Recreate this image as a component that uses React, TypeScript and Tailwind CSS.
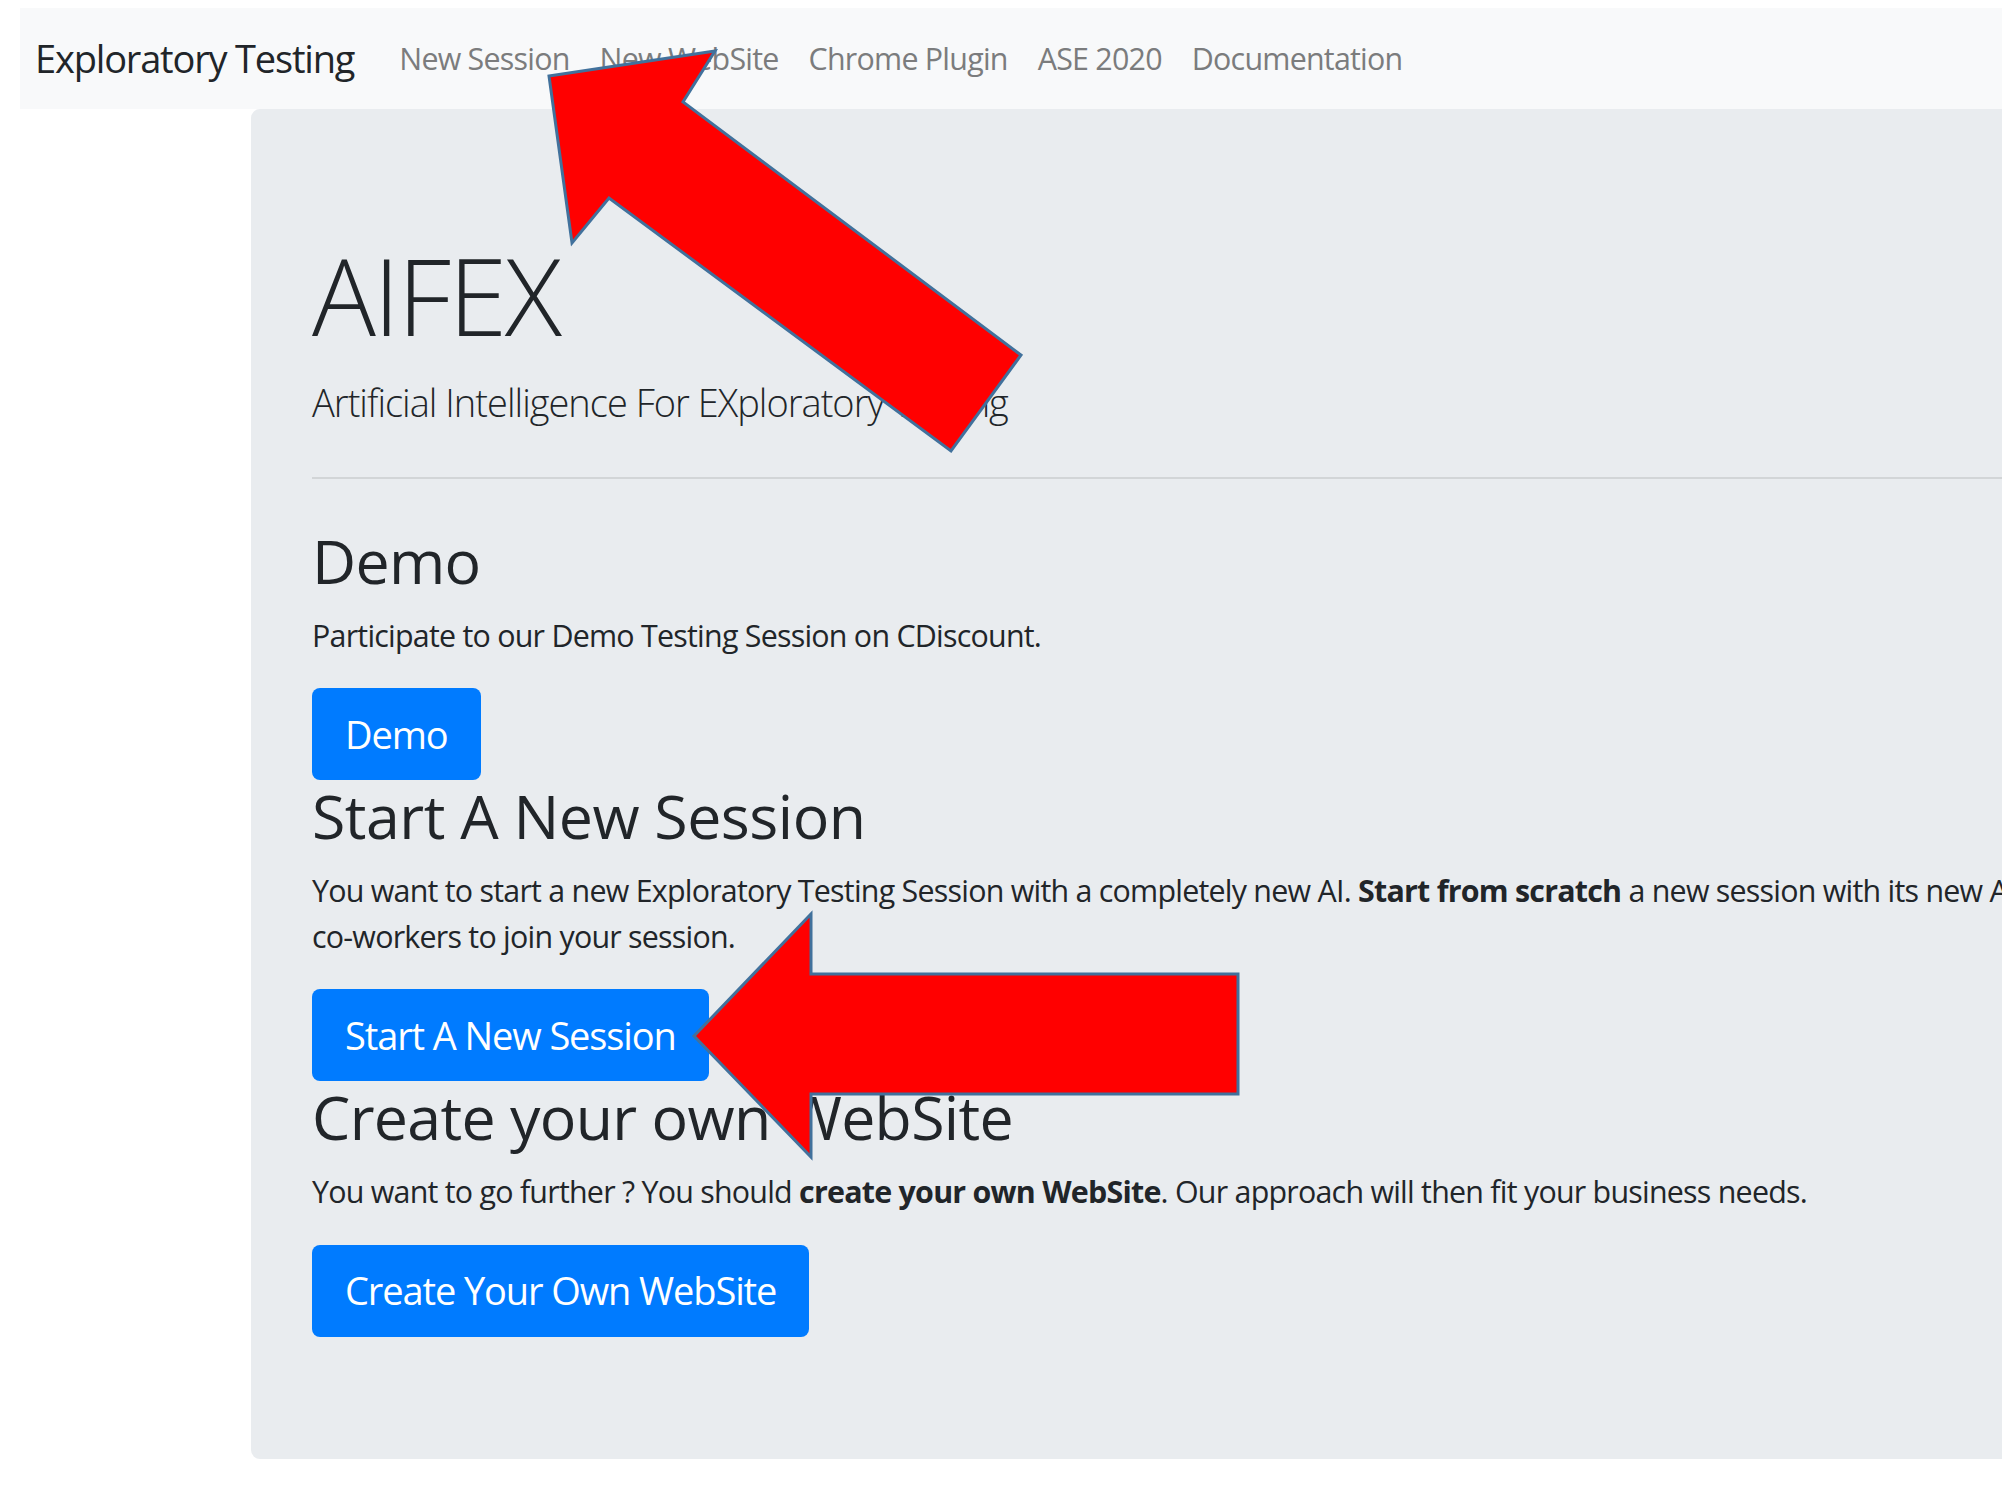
import React from 'react'

const links = ['New Session', 'New WebSite', 'Chrome Plugin', 'ASE 2020', 'Documentation']

const Arrows = () => (
  <svg className="absolute left-0 top-0 pointer-events-none" width="2002" height="1499" viewBox="0 0 2002 1499">
    <polygon
      points="549,76 715,51 683,102 1021,355 951,451 609,198 572,243"
      fill="#ff0000"
      stroke="#41719c"
      strokeWidth="3"
      strokeLinejoin="miter"
    />
    <polygon
      points="694,1036 811,914 811,974 1238,974 1238,1094 811,1094 811,1157"
      fill="#ff0000"
      stroke="#41719c"
      strokeWidth="3"
      strokeLinejoin="miter"
    />
  </svg>
)

const Button = ({ label }: { label: string }) => (
  <div className="inline-flex h-[92px] items-center rounded-[8px] bg-[#007bff] px-[33px] text-[38px] tracking-[-0.029em] text-white">
    {label}
  </div>
)

const App = () => {
  return (
    <div className="relative h-[1499px] w-[2002px] overflow-hidden bg-white font-['Open_Sans',sans-serif] text-[#212529]">
      <nav className="ml-[20px] mt-[8px] flex h-[101px] w-[2400px] items-center bg-[#f8f9fa] pl-[15px]">
        <span className="mr-[30px] text-[38px] leading-[1.5] tracking-[-0.031em]">Exploratory Testing</span>
        {links.map((l) => (
          <span key={l} className="px-[15px] text-[30.4px] leading-[1.5] tracking-[-0.025em] text-[#7b7c7d]">
            {l}
          </span>
        ))}
      </nav>

      <div className="ml-[251px] w-[2400px] rounded-[9px] bg-[#e9ecef] px-[61px] pt-[122px] pb-[122px]">
        <h1 className="mb-[15px] text-[106.4px] font-light leading-[1.2] tracking-[-0.024em]">AIFEX</h1>
        <p className="text-[38px] font-light leading-[1.5] tracking-[-0.026em]">
          Artificial Intelligence For EXploratory Testing
        </p>
        <hr className="my-[46px] border-t-[2px] border-[#d2d5d7]" />

        <h2 className="mb-[15px] text-[60.8px] font-medium leading-[1.2] tracking-[-0.011em]">Demo</h2>
        <p className="mb-[30px] text-[30.4px] leading-[1.5] tracking-[-0.025em]">
          Participate to our Demo Testing Session on CDiscount.
        </p>
        <Button label="Demo" />

        <h2 className="mb-[15px] text-[60.8px] font-medium leading-[1.2] tracking-[-0.008em]">Start A New Session</h2>
        <p className="mb-[30px] whitespace-nowrap text-[30.4px] leading-[1.5] tracking-[-0.025em]">
          You want to start a new Exploratory Testing Session with a completely new AI. <b>Start from scratch</b> a new
          session with its new AI and invite your
          <br />
          co-workers to join your session.
        </p>
        <Button label="Start A New Session" />

        <h2 className="mb-[15px] text-[60.8px] font-medium leading-[1.2] tracking-[-0.011em]">Create your own WebSite</h2>
        <p className="mb-[30px] text-[30.4px] leading-[1.5] tracking-[-0.025em]">
          You want to go further ? You should <b>create your own WebSite</b>. Our approach will then fit your business
          needs.
        </p>
        <Button label="Create Your Own WebSite" />
      </div>

      <Arrows />
    </div>
  )
}

export default App
